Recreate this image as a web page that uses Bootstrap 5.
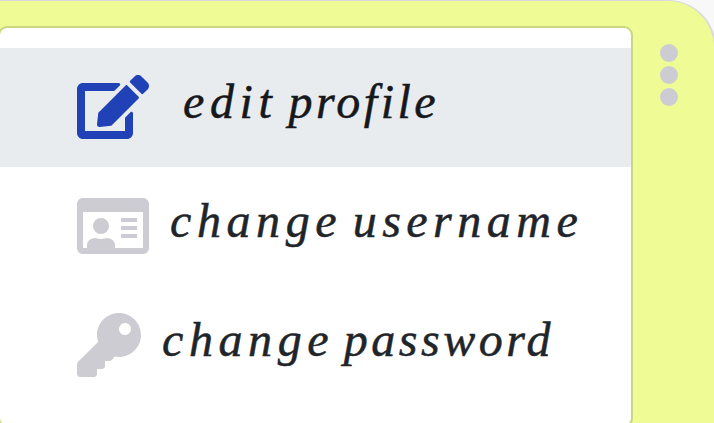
<!DOCTYPE html>
<html lang="en">
<head>
<meta charset="utf-8">
<meta name="viewport" content="width=device-width, initial-scale=1">
<title>Profile menu</title>
<link href="https://cdn.jsdelivr.net/npm/bootstrap@5.3.0/dist/css/bootstrap.min.css" rel="stylesheet">
<style>
  body { background: #f8f8f9; width: 714px; height: 423px; }
  .panel { width: 720px; height: 423px; margin-left: -4px; padding-top: 25px; background: #effb95; border: 2px solid #d9d8dd; border-top-width: 1px; border-bottom: 0; border-top-right-radius: 48px; }
  .menu-box { width: 635px; height: 401px; padding: 20px 0; border: 2px solid #cbd582; border-radius: 9px; list-style: none; }
  .menu-row { height: 119.3px; padding: 0 0 2px 77px; color: #212529; }
  .menu-row.current { background: #e8ecef; color: #16181b; }
  .menu-row svg { fill: #cdccd2; height: 64px; flex: none; }
  .menu-row.current svg { fill: #2042b6; }
  .label-text { font: italic 48px/60px "Liberation Serif", serif; white-space: pre; padding-bottom: 10px; -webkit-text-stroke: .5px currentColor; }
  .wide { letter-spacing: 5.6px; }
  .medium { letter-spacing: 5.5px; }
  .close-set { letter-spacing: 3.5px; }
  .w1 { margin-left: 34px; word-spacing: -1px; }
  .w2 { margin-left: 21px; word-spacing: -1.6px; }
  .w3 { margin-left: 21px; word-spacing: -2.4px; }
  .dots { margin: 18px 0 0 27px; gap: 4px; height: 62px; border: 0; background: none; padding: 0; }
  .dots span { width: 18px; height: 18px; background: #cdccd2; }
</style>
</head>
<body class="overflow-hidden">
<div class="panel d-flex align-items-start overflow-hidden">
  <ul class="menu-box bg-white m-0 overflow-hidden flex-shrink-0">
    <li class="menu-row current d-flex align-items-center">
      <svg viewBox="0 0 576 512" width="72"><path d="M402.6 83.2l90.2 90.2c3.8 3.8 3.8 10 0 13.8L274.4 405.6l-92.8 10.3c-12.4 1.4-22.9-9.1-21.5-21.5l10.3-92.8L388.8 83.2c3.8-3.8 10-3.8 13.8 0zm162-22.9l-48.8-48.8c-15.2-15.2-39.9-15.2-55.2 0l-35.4 35.4c-3.8 3.8-3.8 10 0 13.8l90.2 90.2c3.8 3.8 10 3.8 13.8 0l35.4-35.4c15.2-15.3 15.2-40 0-55.2zM384 346.2V448H64V128h229.8c3.2 0 6.2-1.3 8.5-3.5l40-40c7.6-7.6 2.2-20.5-8.500-20.500H48C21.500 64 0 85.500 0 112v352c0 26.500 21.500 48 48 48h352c26.500 0 48-21.500 48-48V306.200c0-10.700-12.900-16-20.500-8.500l-40 40c-2.200 2.300-3.500 5.300-3.500 8.500z"/></svg>
      <span class="label-text w1"><span class="wide">edit</span> <span class="close-set">profile</span></span>
    </li>
    <li class="menu-row d-flex align-items-center">
      <svg viewBox="0 0 576 512" width="72"><path fill-rule="evenodd" d="M528 32H48C21.5 32 0 53.5 0 80v352c0 26.5 21.5 48 48 48h480c26.5 0 48-21.5 48-48V80c0-26.5-21.5-48-48-48zm0 400H303.200c.9-4.500.8 3.600.8-22.400 0-31.800-30.100-57.600-67.200-57.600-10.800 0-18.700 8-44.800 8-26.900 0-33.400-8-44.800-8-37.100 0-67.200 25.800-67.200 57.600 0 26-.2 17.900.8 22.400H48V144h480z"/><circle cx="192" cy="256" r="64"/><path d="M352 192h128v32H352zM352 256h128v32H352zM352 320h128v32H352z"/></svg>
      <span class="label-text w2"><span class="wide">change</span> <span class="medium">username</span></span>
    </li>
    <li class="menu-row d-flex align-items-center">
      <svg viewBox="0 0 512 512" width="64"><path d="M512 176.001C512 273.203 433.202 352 336 352c-11.220 0-22.190-1.062-32.827-3.069l-24.012 27.014A23.999 23.999 0 0 1 261.223 384H224v40c0 13.255-10.745 24-24 24h-40v40c0 13.255-10.745 24-24 24H24c-13.255 0-24-10.745-24-24v-78.059c0-6.365 2.529-12.470 7.029-16.971l161.802-161.802C163.108 213.814 160 195.271 160 176 160 78.798 238.797.001 335.999 0 433.488-.001 512 78.511 512 176.001zM336 128c0 26.510 21.490 48 48 48s48-21.490 48-48-21.490-48-48-48-48 21.490-48 48z"/></svg>
      <span class="label-text w3"><span class="wide">change</span> <span class="close-set">password</span></span>
    </li>
  </ul>
  <button class="dots d-flex flex-column" aria-label="Options"><span class="rounded-circle"></span><span class="rounded-circle"></span><span class="rounded-circle"></span></button>
</div>
<script src="https://cdn.jsdelivr.net/npm/bootstrap@5.3.0/dist/js/bootstrap.bundle.min.js"></script>
</body>
</html>
